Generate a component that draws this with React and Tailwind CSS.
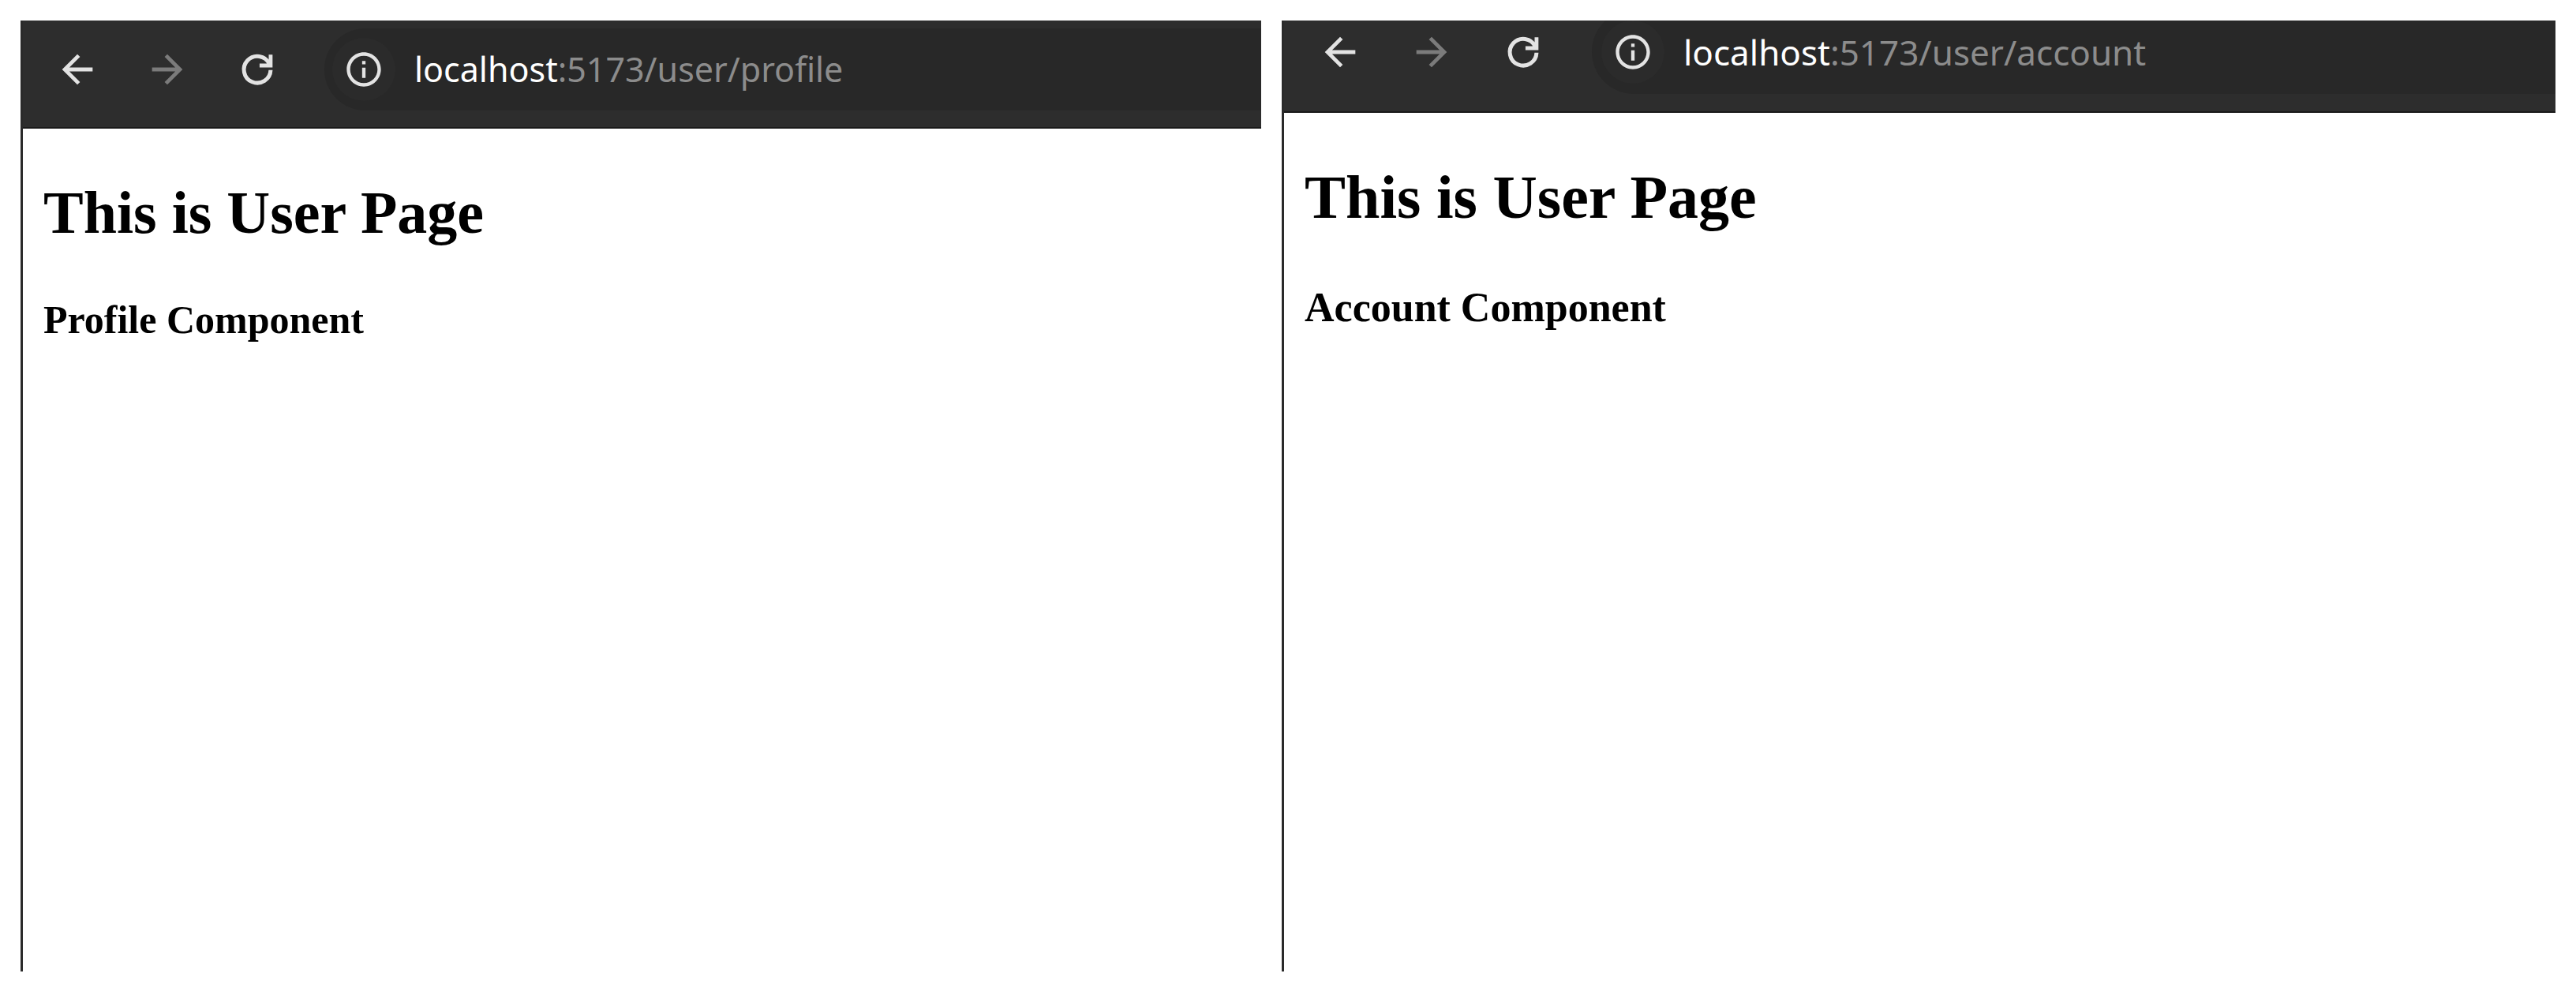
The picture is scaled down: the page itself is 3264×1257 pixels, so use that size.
function NavButton({ label, disabled, children }) {
  return (
    <button
      type="button"
      aria-label={label}
      disabled={disabled}
      className="size-[58px] shrink-0 text-[#e3e3e3] disabled:text-[#7b7b7b]"
    >
      <svg className="size-full" viewBox="0 0 24 24" fill="currentColor">
        {children}
      </svg>
    </button>
  );
}

function AddressBar({ host, path, className }) {
  return (
    <div className={`flex flex-1 shrink-0 items-center gap-6 rounded-l-full bg-[#282828] ${className}`}>
      <button
        type="button"
        aria-label="View site information"
        className="flex size-20 shrink-0 items-center justify-center rounded-full bg-[#2b2b2b] text-[#e3e3e3]"
      >
        <svg className="size-[52px]" viewBox="0 0 24 24" fill="currentColor">
          <path d="M11 7h2v2h-2zm0 4h2v6h-2zm1-9C6.48 2 2 6.48 2 12s4.48 10 10 10 10-4.48 10-10S17.52 2 12 2m0 18c-4.41 0-8-3.59-8-8s3.59-8 8-8 8 3.59 8 8-3.59 8-8 8" />
        </svg>
      </button>
      <div
        role="textbox"
        aria-label="Address"
        className={`font-['Noto_Sans',sans-serif] leading-[44px] whitespace-nowrap text-[#8c8c8c]`}
      >
        <span className="text-white">{host}</span>
        {path}
      </div>
    </div>
  );
}

function Toolbar({ path, className, barClassName }) {
  return (
    <nav className={`flex items-center overflow-hidden border-b-2 border-[#1a1a1a] bg-[#2d2d2d] font-normal ${className}`}>
      <NavButton label="Back">
        <path d="M20 11H7.83l5.59-5.59L12 4l-8 8 8 8 1.41-1.41L7.83 13H20z" />
      </NavButton>
      <NavButton label="Forward" disabled>
        <path d="m12 4-1.41 1.41L16.17 11H4v2h12.17l-5.58 5.59L12 20l8-8z" />
      </NavButton>
      <NavButton label="Reload">
        <path d="M19 12.3A7 7 0 1 1 18.3 9" fill="none" stroke="currentColor" strokeWidth={2.1} />
        <path d="M18 4.2h2V11h-6.8V8.9h3.6l1.2-1.2z" />
      </NavButton>
      <AddressBar host="localhost" path={path} className={barClassName} />
    </nav>
  );
}

export default function App() {
  return (
    <div className="grid min-h-screen grid-cols-[1572fr_1614fr] gap-[26px] bg-white p-[26px] font-['Liberation_Serif',serif] font-bold text-black">
      {/* /user/profile */}
      <section className="border-l-[3px] border-[#2a2a2a]">
        <Toolbar
          path=":5173/user/profile"
          className="gap-14 pt-[10px] pb-[21px] pl-10 text-[43px]"
          barClassName="h-[104px] pl-[10px]"
        />
        <main className="px-[26px] pt-16">
          <h1 className="text-[76px] leading-[84px]">This is User Page</h1>
          <h3 className="mt-[66px] text-[50px] leading-[56px]">Profile Component</h3>
        </main>
      </section>

      <section className="border-l-[3px] border-[#2a2a2a]">
        <Toolbar
          path=":5173/user/account"
          className="h-[117px] gap-[58px] pb-[36px] pl-[42px] text-[44px]"
          barClassName="h-[107px] pl-3"
        />
        <main className="px-[26px] pt-16">
          <h1 className="text-[78px] leading-[86px]">This is User Page</h1>
          <h3 className="mt-[68px] text-[52px] leading-[58px]">Account Component</h3>
        </main>
      </section>
    </div>
  );
}
